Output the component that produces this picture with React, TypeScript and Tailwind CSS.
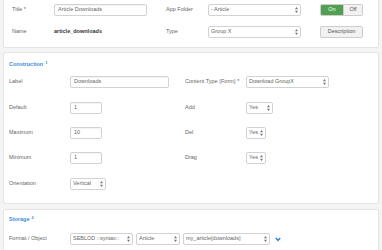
import React from 'react';

const Arrows = () => (
  <svg width="3" height="6" viewBox="0 0 3 6" className="shrink-0">
    <path d="M1.5 0 L3 2.2 L0 2.2 Z M1.5 6 L3 3.8 L0 3.8 Z" fill="#777" />
  </svg>
);

const Input = ({ value, w }: { value: string; w: string }) => (
  <div className={`${w} h-[12px] border border-[#d2d2d2] rounded-[2px] bg-white flex items-center pl-[3px] text-[#666] shadow-[inset_0_1px_1px_rgba(0,0,0,0.05)]`}>
    {value}
  </div>
);

const Select = ({ value, w }: { value: string; w: string }) => (
  <div className={`${w} h-[12px] border border-[#d2d2d2] rounded-[2px] bg-white flex items-center justify-between gap-[1px] pl-[2px] pr-[2px] text-[#666] whitespace-nowrap`}>
    <span className="shrink-0">{value}</span>
    <Arrows />
  </div>
);

const Label = ({ children, w }: { children: React.ReactNode; w: string }) => (
  <div className={`${w} shrink-0 text-[#666]`}>{children}</div>
);

export default function App() {
  return (
    <div
      className="w-[382px] h-[250px] overflow-hidden bg-[#f4f4f4] text-[5.5px] leading-none"
      style={{ fontFamily: '"Liberation Sans", Arial, sans-serif' }}
    >
      {/* top panel */}
      <div className="mx-[3px] h-[48px] bg-white border border-t-0 border-[#e4e4e4] rounded-b-[2px] pl-[8px] pt-[4px] flex flex-col gap-[10px]">
        <div className="flex items-center h-[12px]">
          <Label w="w-[42px]">Title *</Label>
          <Input value="Article Downloads" w="w-[93px]" />
          <div className="w-[19px]" />
          <Label w="w-[42px]">App Folder</Label>
          <Select value="- Article" w="w-[93px]" />
          <div className="w-[19px]" />
          <div className="flex h-[12px] w-[43px] rounded-[2px] overflow-hidden border border-[#cdcdcd]">
            <div className="w-[22px] bg-[#4fa14f] text-white flex items-center justify-center">On</div>
            <div className="flex-1 bg-[#f2f2f2] text-[#555] flex items-center justify-center border-l border-[#cdcdcd]">Off</div>
          </div>
        </div>
        <div className="flex items-center h-[12px]">
          <Label w="w-[42px]">Name</Label>
          <div className="w-[93px] font-bold text-[#333]">article_downloads</div>
          <div className="w-[19px]" />
          <Label w="w-[42px]">Type</Label>
          <Select value="Group X" w="w-[93px]" />
          <div className="w-[19px]" />
          <div className="h-[12px] w-[43px] rounded-[2px] border border-[#cdcdcd] bg-[#f2f2f2] text-[#555] flex items-center justify-center">
            Description
          </div>
        </div>
      </div>

      {/* construction panel */}
      <div className="mx-[3px] mt-[4px] h-[152px] bg-white border border-[#e4e4e4] rounded-[2px] pl-[5px] pt-[8px]">
        <div className="h-[8px] text-[#3b8de0] font-bold flex items-center">
          Construction<sup className="ml-[2px] text-[4px]">1</sup>
        </div>
        <div className="mt-[7px] flex flex-col">
          <div className="flex items-center h-[12px]">
            <Label w="w-[61px]">Label</Label>
            <div className="w-[115px]"><Input value="Downloads" w="w-[99px]" /></div>
            <Label w="w-[61px]">Content Type (Form) *</Label>
            <Select value="Download GroupX" w="w-[83px]" />
          </div>
          <div className="flex items-center h-[12px] mt-[14px]">
            <Label w="w-[61px]">Default</Label>
            <div className="w-[115px]"><Input value="1" w="w-[32px]" /></div>
            <Label w="w-[61px]">Add</Label>
            <Select value="Yes" w="w-[27px]" />
          </div>
          <div className="flex items-center h-[12px] mt-[13px]">
            <Label w="w-[61px]">Maximum</Label>
            <div className="w-[115px]"><Input value="10" w="w-[32px]" /></div>
            <Label w="w-[61px]">Del</Label>
            <Select value="Yes" w="w-[20px]" />
          </div>
          <div className="flex items-center h-[12px] mt-[13px]">
            <Label w="w-[61px]">Minimum</Label>
            <div className="w-[115px]"><Input value="1" w="w-[32px]" /></div>
            <Label w="w-[61px]">Drag</Label>
            <Select value="Yes" w="w-[20px]" />
          </div>
          <div className="flex items-center h-[12px] mt-[14px]">
            <Label w="w-[61px]">Orientation</Label>
            <Select value="Vertical" w="w-[36px]" />
          </div>
        </div>
      </div>

      {/* storage panel */}
      <div className="mx-[3px] mt-[5px] h-[60px] bg-white border border-[#e4e4e4] rounded-[2px] pl-[5px] pt-[6px]">
        <div className="h-[8px] text-[#3b8de0] font-bold flex items-center">
          Storage<sup className="ml-[2px] text-[4px]">2</sup>
        </div>
        <div className="flex items-center h-[12px] mt-[9px]">
          <Label w="w-[61px]">Format / Object</Label>
          <Select value="SEBLOD ::syntax::" w="w-[63px]" />
          <div className="w-[3px]" />
          <Select value="Article" w="w-[44px]" />
          <div className="w-[3px]" />
          <Select value="my_article[downloads]" w="w-[87px]" />
          <svg width="6" height="5" viewBox="0 0 6 5" className="ml-[5px]">
            <path d="M0.8 1 L3 3.4 L5.2 1" fill="none" stroke="#3d86d4" strokeWidth="1.6" />
          </svg>
        </div>
      </div>
    </div>
  );
}
